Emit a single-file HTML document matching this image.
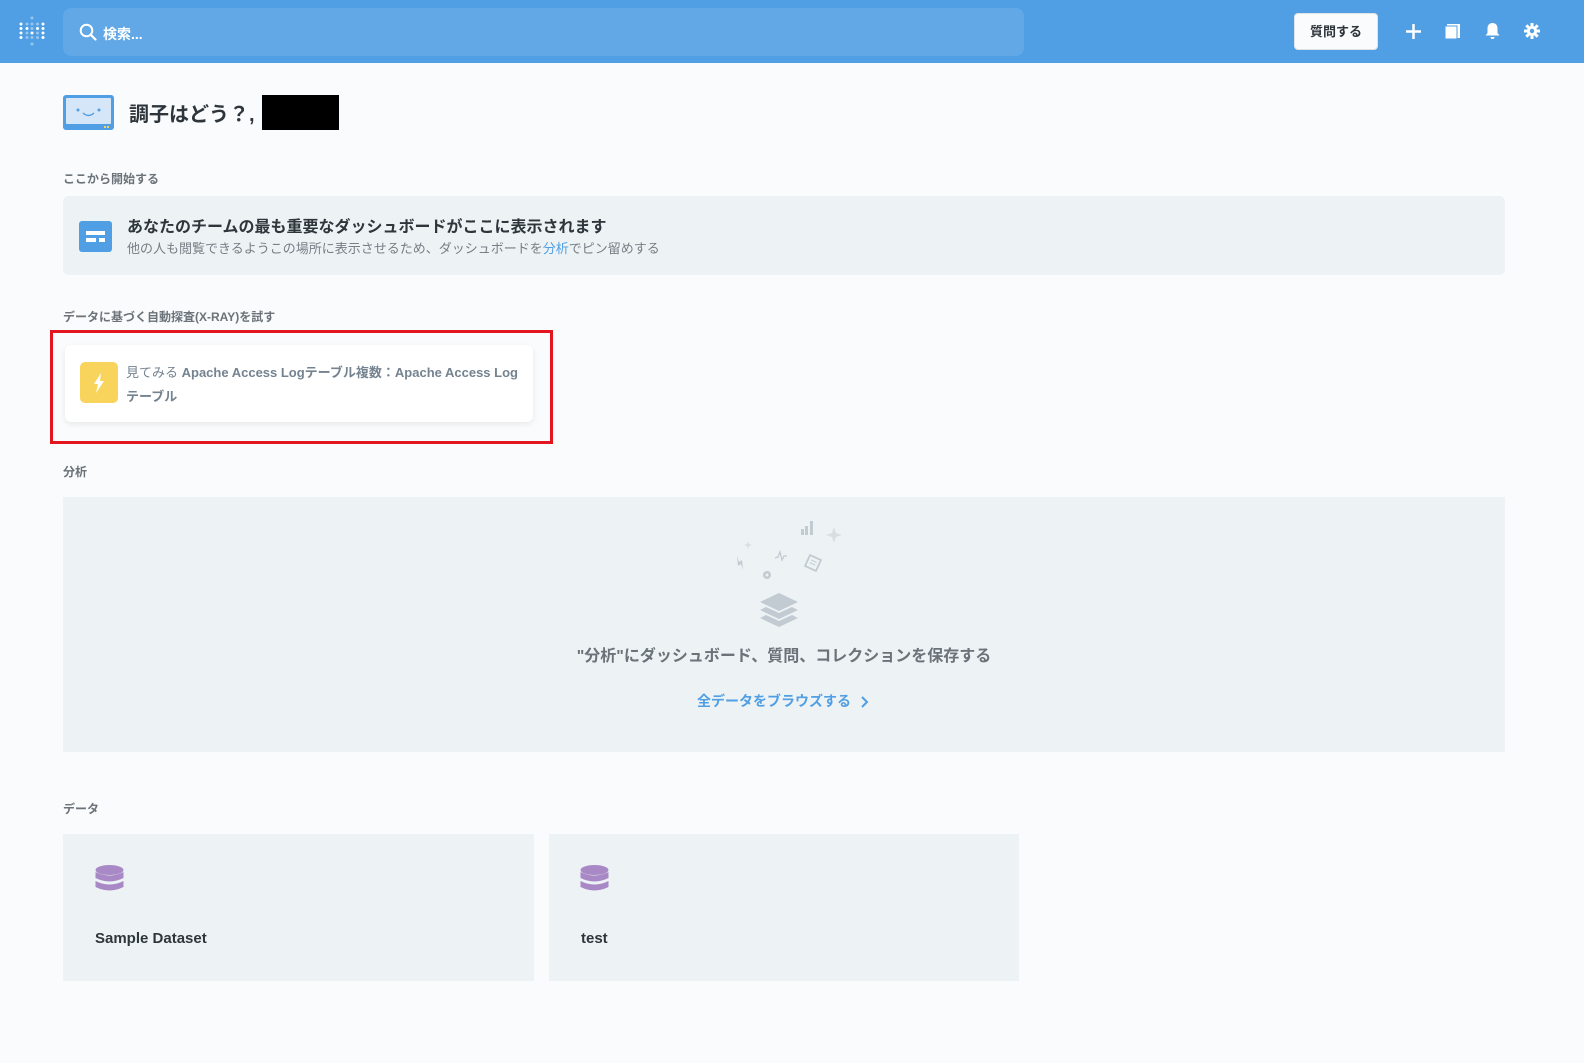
<!DOCTYPE html>
<html style="overflow:hidden;width:1584px;height:1063px"><head><meta charset="utf-8"><style>
*{box-sizing:border-box;margin:0;padding:0}
html,body{overflow:hidden}
body{width:1584px;height:1063px;background:#f9fbfc;font-family:"Liberation Sans","Noto Sans CJK JP",sans-serif;color:#2e353b;position:relative}
.abs{position:absolute}
.hdr{left:0;top:0;width:1584px;height:63px;background:#509ee3}
.search{left:63px;top:8px;width:961px;height:48px;background:#62a8e6;border-radius:8px}
.lbl{font-size:12px;font-weight:bold;color:#6b7279}
</style></head><body>
<div class="abs hdr"></div>
<svg class="abs" style="left:19px;top:15px" width="27" height="34" viewBox="0 0 27 34">
<g fill="#fff">
<circle cx="2" cy="9" r="1.5"/><circle cx="2" cy="13.5" r="1.5"/><circle cx="2" cy="18" r="1.5"/><circle cx="2" cy="22.5" r="1.5"/>
<circle cx="24" cy="9" r="1.5"/><circle cx="24" cy="13.5" r="1.5"/><circle cx="24" cy="18" r="1.5"/><circle cx="24" cy="22.5" r="1.5"/>
<circle cx="8" cy="13.5" r="1.5"/><circle cx="13" cy="18" r="1.5"/><circle cx="18.5" cy="13.5" r="1.5"/></g>
<g fill="#fff" opacity=".4"><circle cx="8" cy="9" r="1.5"/><circle cx="13" cy="9" r="1.5"/><circle cx="18.5" cy="9" r="1.5"/><circle cx="13" cy="3" r="1.5"/><circle cx="8" cy="18" r="1.5"/><circle cx="18.5" cy="18" r="1.5"/><circle cx="8" cy="22.5" r="1.5"/><circle cx="13" cy="22.5" r="1.5"/><circle cx="18.5" cy="22.5" r="1.5"/><circle cx="13" cy="29" r="1.5"/><circle cx="13" cy="13.5" r="1.5"/></g>
</svg>
<div class="abs search"></div>
<svg class="abs" style="left:79px;top:23px" width="18" height="18" viewBox="0 0 18 18"><circle cx="7.5" cy="7.5" r="5.8" fill="none" stroke="#fff" stroke-width="2"/><path d="M12 12l4.5 4.5" stroke="#fff" stroke-width="2.2" stroke-linecap="round"/></svg>
<div class="abs" style="left:103px;top:24px;font-size:14px;font-weight:bold;color:#fff">検索...</div>
<div class="abs" style="left:1294px;top:13px;width:84px;height:37px;background:#f9fbfc;border:1px solid #dfe3e6;border-radius:4px;font-size:13px;font-weight:bold;text-align:center;line-height:35px">質問する</div>
<svg class="abs" style="left:1405px;top:23px" width="17" height="17"><path d="M8.5 1v15M1 8.5h15" stroke="#fff" stroke-width="2.5"/></svg>
<svg class="abs" style="left:1444px;top:22px" width="18" height="18"><path d="M3 2h13v14H3z" fill="#fff"/><path d="M1 4h12v13H1z" fill="#fff" stroke="#509ee3" stroke-width="1"/></svg>
<svg class="abs" style="left:1484px;top:22px" width="17" height="18"><path d="M8.5 1c3.5 0 5 2.5 5 5.5v4.5l2 2.5H1.5l2-2.5V6.5C3.5 3.5 5 1 8.5 1z M6.5 15h4a2 2 0 0 1-4 0z" fill="#fff"/></svg>
<svg class="abs" style="left:1523px;top:22px" width="18" height="18" viewBox="0 0 18 18"><g stroke="#fff" stroke-width="3"><path d="M9 1v16M1 9h16M3.3 3.3l11.4 11.4M14.7 3.3L3.3 14.7"/></g><circle cx="9" cy="9" r="5" fill="#fff"/><circle cx="9" cy="9" r="2.2" fill="#509ee3"/></svg>

<svg class="abs" style="left:63px;top:95px" width="51" height="35" viewBox="0 0 51 35"><rect x="0" y="0" width="51" height="35" rx="3" fill="#509ee3"/><rect x="3" y="3" width="45" height="26" rx="1" fill="#d4e6f8"/><circle cx="15" cy="15" r="1.5" fill="#509ee3"/><circle cx="36" cy="15" r="1.5" fill="#509ee3"/><path d="M20 18q5.5 5 11 0" stroke="#509ee3" stroke-width="1.5" fill="none"/><rect x="41" y="31" width="2" height="2" fill="#f9d45c"/><rect x="44" y="31" width="2" height="2" fill="#f9d45c"/></svg>
<div class="abs" style="left:129px;top:98px;font-size:20px;font-weight:bold">調子はどう？,</div>
<div class="abs" style="left:262px;top:95px;width:77px;height:35px;background:#000"></div>

<div class="abs lbl" style="left:63px;top:170px">ここから開始する</div>
<div class="abs" style="left:63px;top:196px;width:1442px;height:79px;background:#edf2f5;border-radius:6px"></div>
<svg class="abs" style="left:79px;top:221px" width="33" height="31"><rect width="33" height="31" rx="3" fill="#509ee3"/><rect x="7" y="10" width="19" height="4" fill="#fff"/><rect x="7" y="17" width="10" height="4" fill="#fff"/><rect x="20" y="17" width="6" height="4" fill="#fff"/></svg>
<div class="abs" style="left:127px;top:213px;font-size:16px;font-weight:bold">あなたのチームの最も重要なダッシュボードがここに表示されます</div>
<div class="abs" style="left:127px;top:238px;font-size:13px;color:#777e85">他の人も閲覧できるようこの場所に表示させるため、ダッシュボードを<span style="color:#509ee3">分析</span>でピン留めする</div>

<div class="abs lbl" style="left:63px;top:308px">データに基づく自動探査(X-RAY)を試す</div>
<div class="abs" style="left:50px;top:330px;width:503px;height:114px;border:3px solid #e3151f"></div>
<div class="abs" style="left:65px;top:345px;width:468px;height:77px;background:#fff;border-radius:6px;box-shadow:0 2px 6px rgba(0,0,0,.08)"></div>
<div class="abs" style="left:80px;top:362px;width:38px;height:41px;background:#f9d45c;border-radius:5px"></div>
<svg class="abs" style="left:92px;top:373px" width="14" height="20"><path d="M9 0L2 11h4l-2 9 8-12H8z" fill="#fff"/></svg>
<div class="abs" style="left:126px;top:361px;width:400px;font-size:13px;line-height:24px;color:#74838f;white-space:nowrap">見てみる <b>Apache Access Logテーブル複数：Apache Access Log</b><br><b>テーブル</b></div>

<div class="abs lbl" style="left:63px;top:463px">分析</div>
<div class="abs" style="left:63px;top:497px;width:1442px;height:255px;background:#edf2f5"></div>
<svg class="abs" style="left:730px;top:518px" width="120" height="115" viewBox="0 0 120 115">
<g fill="#c2cbd1">
<rect x="71" y="11" width="3" height="6"/><rect x="75" y="8" width="3" height="9"/><rect x="80" y="3" width="3" height="14"/>
<path d="M104 9l2 6 6 2-6 2-2 6-2-6-6-2 6-2z" opacity=".5"/>
<path d="M18 23l1 3 3 1-3 1-1 3-1-3-3-1 3-1z" opacity=".5"/>
<path d="M7 38l2 6 3-2 1 10-2-6-3 2z"/>
<circle cx="37" cy="57" r="4"/>
</g>
<circle cx="37" cy="57" r="1.5" fill="#edf2f5"/>
<path d="M45 40l3-1 2-5 2 8 2-4 3 0" stroke="#c2cbd1" stroke-width="1.3" fill="none"/>
<g transform="rotate(25 83 45)"><rect x="77" y="39" width="12" height="12" fill="none" stroke="#c2cbd1" stroke-width="1.8"/><path d="M80 43h6M80 46h6" stroke="#c2cbd1"/></g>
<path d="M30 84l19-9 19 9-19 9z" fill="#c2cbd1"/>
<path d="M30 92l6-3 13 6 13-6 6 3-19 9z" fill="#c2cbd1"/>
<path d="M30 100l6-3 13 6 13-6 6 3-19 9z" fill="#c2cbd1"/>
</svg>
<div class="abs" style="left:0;width:1568px;top:642px;text-align:center;font-size:16px;font-weight:bold;color:#6b7279">"分析"にダッシュボード、質問、コレクションを保存する</div>
<div class="abs" style="left:697px;top:691px;font-size:14px;font-weight:bold;color:#509ee3">全データをブラウズする</div>
<svg class="abs" style="left:860px;top:696px" width="9" height="12"><path d="M2 1l5 5-5 5" stroke="#509ee3" stroke-width="2" fill="none"/></svg>

<div class="abs lbl" style="left:63px;top:800px">データ</div>
<div class="abs" style="left:63px;top:834px;width:471px;height:147px;background:#edf2f5"></div>
<div class="abs" style="left:549px;top:834px;width:470px;height:147px;background:#edf2f5"></div>
<svg class="abs" style="left:95px;top:865px" width="29" height="29"><g fill="#a989c5"><ellipse cx="14.5" cy="5" rx="14" ry="5"/><path d="M0.5 7q14 7 28 0v6q-14 7-28 0z"/><path d="M0.5 16q14 7 28 0v6q-14 7-28 0z"/></g></svg>
<svg class="abs" style="left:580px;top:865px" width="29" height="29"><g fill="#a989c5"><ellipse cx="14.5" cy="5" rx="14" ry="5"/><path d="M0.5 7q14 7 28 0v6q-14 7-28 0z"/><path d="M0.5 16q14 7 28 0v6q-14 7-28 0z"/></g></svg>
<div class="abs" style="left:95px;top:930px;font-size:15px;font-weight:bold">Sample Dataset</div>
<div class="abs" style="left:581px;top:930px;font-size:15px;font-weight:bold">test</div>
</body></html>
